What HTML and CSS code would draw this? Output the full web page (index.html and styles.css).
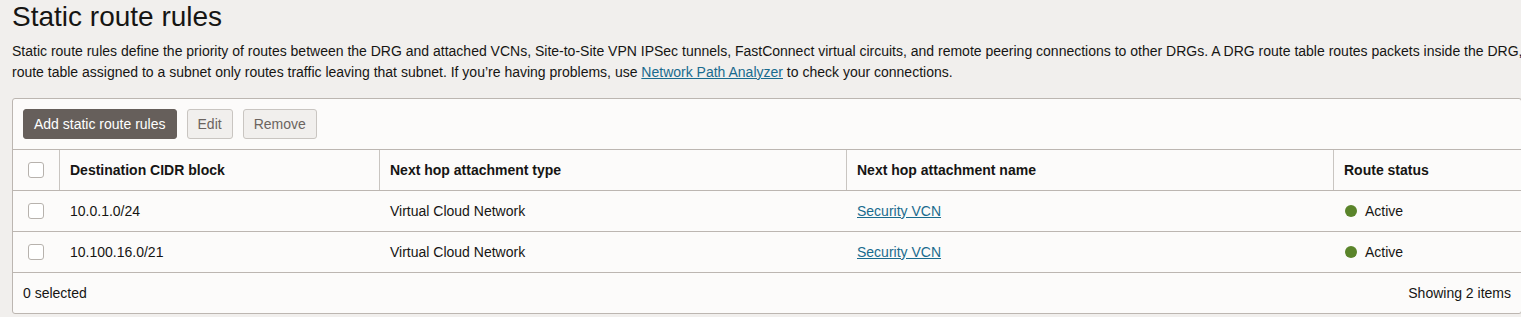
FILE: index.html
```html
<!DOCTYPE html>
<html lang="en">
<head>
  <meta charset="UTF-8">
  <title>Static route rules</title>
  <link rel="stylesheet" href="styles.css">
</head>
<body>

<div class="page">
  <h1 class="page-title">Static route rules</h1>
  <p class="intro">Static route rules define the priority of routes between the DRG and attached VCNs, Site-to-Site VPN IPSec tunnels, FastConnect virtual circuits, and remote peering connections to other DRGs. A DRG route table routes packets inside the DRG, while a VCN route table assigned to a subnet only routes traffic leaving that subnet. If you’re having problems, use <a href="#">Network Path Analyzer</a> to check your connections.</p>

  <div class="panel">
    <div class="toolbar">
      <button class="btn btn-primary">Add static route rules</button>
      <button class="btn">Edit</button>
      <button class="btn">Remove</button>
    </div>

    <div class="grid">
      <div class="row row-head">
        <div class="cell cell-check"><span class="check"></span></div>
        <div class="cell">Destination CIDR block</div>
        <div class="cell">Next hop attachment type</div>
        <div class="cell">Next hop attachment name</div>
        <div class="cell">Route status</div>
      </div>
      <div class="row">
        <div class="cell cell-check"><span class="check"></span></div>
        <div class="cell">10.0.1.0/24</div>
        <div class="cell">Virtual Cloud Network</div>
        <div class="cell"><a href="#">Security VCN</a></div>
        <div class="cell"><span class="dot"></span>Active</div>
      </div>
      <div class="row">
        <div class="cell cell-check"><span class="check"></span></div>
        <div class="cell">10.100.16.0/21</div>
        <div class="cell">Virtual Cloud Network</div>
        <div class="cell"><a href="#">Security VCN</a></div>
        <div class="cell"><span class="dot"></span>Active</div>
      </div>
    </div>

    <div class="footer">
      <span>0 selected</span>
      <span>Showing 2 items</span>
    </div>
  </div>
</div>

</body>
</html>
```

FILE: styles.css
```css
html, body {
  overflow: hidden;
}
body {
  margin: 0;
  background: #f1efed;
  font-family: "Liberation Sans", Arial, sans-serif;
  font-size: 14px;
  color: #161513;
}
a {
  color: #1a6b8e;
  text-decoration: underline;
}
.page {
  padding-left: 12px;
  width: 1600px;
}
.page-title {
  margin: 0;
  font-size: 28px;
  font-weight: normal;
  line-height: 34px;
}
.intro {
  margin: 7px 0 15px;
  line-height: 21px;
}
.panel {
  width: 1508px;
  background: #fcfbfa;
  border: 1px solid #bcb6b1;
  border-radius: 3px;
}
.toolbar {
  display: flex;
  gap: 10px;
  padding: 10px;
}
.btn {
  height: 30px;
  padding: 0 10px;
  font-family: inherit;
  font-size: 14px;
  color: #6b6460;
  background: #f1efed;
  border: 1px solid #c9c5c1;
  border-radius: 3px;
}
.btn-primary {
  color: #fff;
  background: #665f5b;
  border-color: #665f5b;
}
.row {
  display: grid;
  grid-template-columns: 46px 320px 467px 487px 1fr;
  height: 40px;
  border-top: 1px solid #bcb6b1;
}
.row-head {
  font-weight: bold;
}
.cell {
  display: flex;
  align-items: center;
  padding-left: 10px;
  padding-bottom: 1px;
  border-left: 1px solid transparent;
}
.cell:first-child {
  border-left: 0;
}
.row-head .cell {
  border-left-color: #c9c5c1;
}
.cell-check {
  justify-content: center;
  padding-left: 0;
}
.check {
  width: 14px;
  height: 14px;
  background: #fff;
  border: 1px solid #b7b2ad;
  border-radius: 3px;
}
.dot {
  width: 12px;
  height: 12px;
  margin: 0 8px 0 1px;
  border-radius: 50%;
  background: #5a842a;
}
.footer {
  display: flex;
  justify-content: space-between;
  align-items: center;
  height: 40px;
  padding: 0 10px;
  border-top: 1px solid #bcb6b1;
}
```
